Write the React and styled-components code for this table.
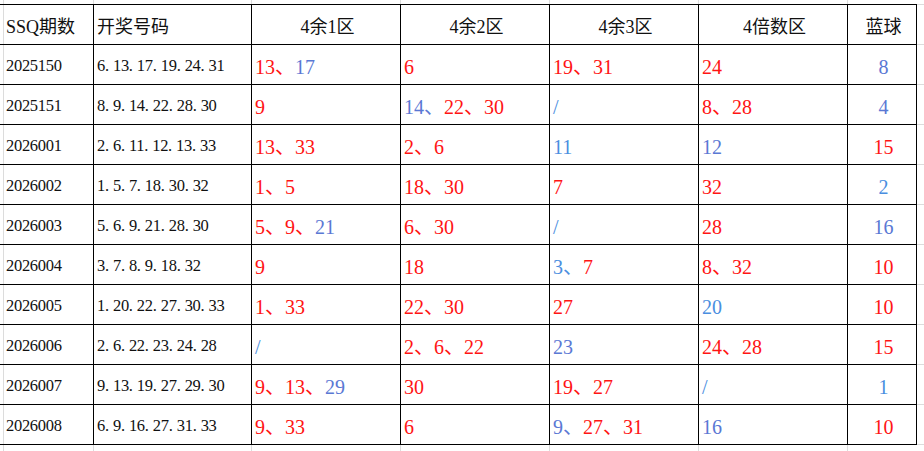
import styled, { createGlobalStyle } from 'styled-components'

const GlobalStyle = createGlobalStyle`
	html, body {
		margin: 0;
		padding: 0;
		background: #fff;
	}
	body {
		font-family: 'Liberation Serif', 'Noto Sans CJK SC', serif;
		color: #111;
	}
`

const red = '#ff1414'
const blue = '#5a78d4'
const sky = '#4a8ee0'

// light spreadsheet gridlines behind the table
const Sheet = styled.div`
	width: 924px;
	height: 451px;
	padding-top: 4px;
	box-sizing: border-box;
	overflow: hidden;
	background-color: #fff;
	background-image:
		linear-gradient(#dcdcdc, #dcdcdc),
		linear-gradient(#dcdcdc, #dcdcdc),
		linear-gradient(#dcdcdc, #dcdcdc),
		linear-gradient(#dcdcdc, #dcdcdc),
		linear-gradient(#dcdcdc, #dcdcdc),
		linear-gradient(#dcdcdc, #dcdcdc),
		linear-gradient(#dcdcdc, #dcdcdc),
		repeating-linear-gradient(to bottom, #dcdcdc 0 1px, transparent 1px 40px);
	background-size: 1px 100%, 1px 100%, 1px 100%, 1px 100%, 1px 100%, 1px 100%, 1px 100%, 100% 100%;
	background-position: 3px 0, 93px 0, 251px 0, 400px 0, 549px 0, 698px 0, 847px 0, 0 4px;
	background-repeat: no-repeat;
`

const Table = styled.div`
	display: grid;
	grid-template-columns: 94px 158px 149px 149px 149px 149px 69px;
	grid-auto-rows: 40px;
	width: 917px;
	border-top: 1px solid #000;
	background: transparent;
`

const Cell = styled.div`
	box-sizing: border-box;
	display: flex;
	align-items: center;
	justify-content: ${(p) => (p.$center ? 'center' : 'flex-start')};
	padding: 4px 0 0 ${(p) => (p.$first ? '6px' : '3px')};
	border-right: 1px solid #000;
	border-bottom: 1px solid #000;
	white-space: nowrap;
	overflow: hidden;
	line-height: 1;
`

const HeadText = styled.span`
	font-size: 18px;
	color: #111;
`

const Issue = styled.span`
	font-size: 16.5px;
	letter-spacing: -0.3px;
	color: #111;
`

const Dot = styled.span`
	display: inline-block;
	width: 8px;
`

const Num = styled.span`
	font-size: 20px;
	color: ${(p) => p.$color};
`

const Sep = styled.span`
	font-family: 'Noto Sans CJK SC', sans-serif;
	font-size: 20px;
	color: ${(p) => p.$color};
`

const R = (n) => [n, red]
const B = (n) => [n, blue]
const L = (n) => [n, sky]
const NONE = [['/', sky]]

const headers = ['SSQ期数', '开奖号码', '4余1区', '4余2区', '4余3区', '4倍数区', '蓝球']

const rows = [
	{
		id: '2025150',
		draw: '6.13.17.19.24.31',
		zones: [[R('13'), B('17')], [R('6')], [R('19'), R('31')], [R('24')]],
		ball: B('8'),
	},
	{
		id: '2025151',
		draw: '8.9.14.22.28.30',
		zones: [[R('9')], [B('14'), R('22'), R('30')], NONE, [R('8'), R('28')]],
		ball: B('4'),
	},
	{
		id: '2026001',
		draw: '2.6.11.12.13.33',
		zones: [[R('13'), R('33')], [R('2'), R('6')], [L('11')], [B('12')]],
		ball: R('15'),
	},
	{
		id: '2026002',
		draw: '1.5.7.18.30.32',
		zones: [[R('1'), R('5')], [R('18'), R('30')], [R('7')], [R('32')]],
		ball: L('2'),
	},
	{
		id: '2026003',
		draw: '5.6.9.21.28.30',
		zones: [[R('5'), R('9'), B('21')], [R('6'), R('30')], NONE, [R('28')]],
		ball: B('16'),
	},
	{
		id: '2026004',
		draw: '3.7.8.9.18.32',
		zones: [[R('9')], [R('18')], [L('3'), R('7')], [R('8'), R('32')]],
		ball: R('10'),
	},
	{
		id: '2026005',
		draw: '1.20.22.27.30.33',
		zones: [[R('1'), R('33')], [R('22'), R('30')], [R('27')], [L('20')]],
		ball: R('10'),
	},
	{
		id: '2026006',
		draw: '2.6.22.23.24.28',
		zones: [NONE, [R('2'), R('6'), R('22')], [B('23')], [R('24'), R('28')]],
		ball: R('15'),
	},
	{
		id: '2026007',
		draw: '9.13.19.27.29.30',
		zones: [[R('9'), R('13'), B('29')], [R('30')], [R('19'), R('27')], NONE],
		ball: L('1'),
	},
	{
		id: '2026008',
		draw: '6.9.16.27.31.33',
		zones: [[R('9'), R('33')], [R('6')], [B('9'), R('27'), R('31')], [B('16')]],
		ball: R('10'),
	},
]

function Draw({ value }) {
	const parts = value.split('.')
	return (
		<Issue>
			{parts.map((p, i) => (
				<span key={i}>
					{p}
					{i < parts.length - 1 && <Dot>.</Dot>}
				</span>
			))}
		</Issue>
	)
}

function Zone({ items }) {
	return (
		<span>
			{items.map(([n, c], i) => (
				<span key={i}>
					<Num $color={c}>{n}</Num>
					{i < items.length - 1 && <Sep $color={c}>、</Sep>}
				</span>
			))}
		</span>
	)
}

function Row({ row }) {
	return (
		<>
			<Cell $first>
				<Issue>{row.id}</Issue>
			</Cell>
			<Cell>
				<Draw value={row.draw} />
			</Cell>
			{row.zones.map((z, i) => (
				<Cell key={i}>
					<Zone items={z} />
				</Cell>
			))}
			<Cell $center>
				<Num $color={row.ball[1]}>{row.ball[0]}</Num>
			</Cell>
		</>
	)
}

export default function App() {
	return (
		<>
			<GlobalStyle />
			<Sheet>
				<Table>
					{headers.map((h, i) => (
						<Cell key={h} $first={i === 0} $center={i > 1}>
							<HeadText>{h}</HeadText>
						</Cell>
					))}
					{rows.map((r) => (
						<Row key={r.id} row={r} />
					))}
				</Table>
			</Sheet>
		</>
	)
}
